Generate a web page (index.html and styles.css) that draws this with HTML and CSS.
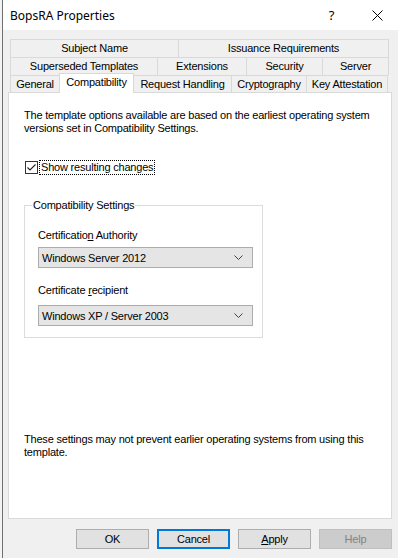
FILE: index.html
```html
<!DOCTYPE html>
<html>
<head>
<meta charset="utf-8">
<title>BopsRA Properties</title>
<link rel="stylesheet" href="styles.css">
</head>
<body>
<div class="window">
  <div class="titlebar">
    <span class="title">BopsRA Properties</span>
    <span class="spacer"></span>
    <span class="tb-btn help-q">?</span>
    <span class="tb-btn close">
      <svg width="11" height="11" viewBox="0 0 11 11"><path d="M0.5 0.5 L10.5 10.5 M10.5 0.5 L0.5 10.5" stroke="#000" stroke-width="1" fill="none"/></svg>
    </span>
  </div>

  <div class="tabs">
    <div class="tab-row r1">
      <div class="tab w168">Subject Name</div>
      <div class="tab w211 last">Issuance Requirements</div>
    </div>
    <div class="tab-row r2">
      <div class="tab w147">Superseded Templates</div>
      <div class="tab w89">Extensions</div>
      <div class="tab w76">Security</div>
      <div class="tab w67 last">Server</div>
    </div>
    <div class="tab-row r3">
      <div class="tab w49">General</div>
      <div class="tab w75 selected">Compatibility</div>
      <div class="tab w98">Request Handling</div>
      <div class="tab w75b">Cryptography</div>
      <div class="tab w82 last">Key Attestation</div>
    </div>
  </div>

  <div class="panel">
    <p class="intro">The template options available are based on the earliest operating system versions set in Compatibility Settings.</p>
    <div class="check-row">
      <span class="checkbox">
        <svg width="11" height="11" viewBox="0 0 11 11"><path d="M1.5 5.5 L4 8 L9.5 2.5" stroke="#222" stroke-width="1.1" fill="none"/></svg>
      </span>
      <span class="check-label">Show resulting changes</span>
    </div>

    <div class="group">
      <span class="legend">Compatibility Settings</span>
      <div class="field-label first">Certificatio<u>n</u> Authority</div>
      <div class="combo">
        <span class="combo-text">Windows Server 2012</span>
        <svg class="chev" width="9" height="5" viewBox="0 0 9 5"><path d="M0.5 0.5 L4.5 4.5 L8.5 0.5" stroke="#444" stroke-width="1" fill="none"/></svg>
      </div>
      <div class="field-label second">Certificate <u>r</u>ecipient</div>
      <div class="combo">
        <span class="combo-text">Windows XP / Server 2003</span>
        <svg class="chev" width="9" height="5" viewBox="0 0 9 5"><path d="M0.5 0.5 L4.5 4.5 L8.5 0.5" stroke="#444" stroke-width="1" fill="none"/></svg>
      </div>
    </div>

    <p class="note">These settings may not prevent earlier operating systems from using this template.</p>
  </div>

  <div class="buttons">
    <button class="btn">OK</button>
    <button class="btn default">Cancel</button>
    <button class="btn"><u>A</u>pply</button>
    <button class="btn disabled">Help</button>
  </div>
</div>
</body>
</html>
```

FILE: styles.css
```css
* { box-sizing: border-box; }
html, body {
  margin: 0;
  padding: 0;
  width: 398px;
  height: 558px;
  overflow: hidden;
  background: #f3f3f3;
}
body {
  font-family: "Liberation Sans", Arial, sans-serif;
  font-size: 11px;
  letter-spacing: -0.2px;
  color: #000;
}
.window {
  margin-left: 2px;
  height: 558px;
  border-left: 1px solid #707070;
  background: #f0f0f0;
  display: flex;
  flex-direction: column;
}
.titlebar {
  height: 30px;
  background: #fff;
  display: flex;
  align-items: center;
  flex: none;
}
.title {
  font-family: "Noto Sans", "Open Sans", sans-serif;
  font-size: 12px;
  letter-spacing: 0;
  padding-left: 7px;
}
.spacer { flex: 1; }
.tb-btn {
  width: 45px;
  height: 30px;
  display: flex;
  align-items: center;
  justify-content: center;
}
.help-q {
  font-family: "Noto Sans", sans-serif;
  font-size: 13px;
  letter-spacing: 0;
}
.close { width: 44px; padding-left: 2px; }

.tabs {
  margin: 9px 0 0 7px;
  width: 379px;
  flex: none;
}
.tab-row { display: flex; }
.r1 .tab, .r2 .tab { height: 18px; }
.r3 .tab { height: 17px; }
.tab {
  flex: none;
  border-top: 1px solid #d9d9d9;
  border-left: 1px solid #d9d9d9;
  background: #f0f0f0;
  text-align: center;
  line-height: 16px;
  white-space: nowrap;
}
.tab.last { border-right: 1px solid #d9d9d9; }
.w168 { width: 168px; }
.w211 { width: 211px; }
.w147 { width: 147px; }
.w89 { width: 89px; }
.w76 { width: 76px; }
.w67 { width: 67px; }
.w49 { width: 49px; }
.w75 { width: 75px; }
.w98 { width: 98px; }
.w75b { width: 75px; }
.w82 { width: 82px; }
.tab.selected {
  position: relative;
  z-index: 2;
  background: #fff;
  height: 20px;
  margin-top: -2px;
  margin-bottom: -1px;
  border-right: 1px solid #d9d9d9;
  margin-right: -1px;
  line-height: 16px;
}

.panel {
  margin-left: 5px;
  width: 384px;
  height: 427px;
  flex: none;
  background: #fff;
  border: 1px solid #d9d9d9;
  padding: 16px 4px 0 15px;
  position: relative;
  z-index: 1;
}
.intro, .note {
  margin: 0;
  line-height: 13px;
}
.check-row {
  margin-top: 25px;
  height: 15px;
  display: flex;
  align-items: center;
}
.checkbox {
  width: 13px;
  height: 13px;
  border: 1px solid #333;
  background: #fff;
  margin-left: 1px;
  display: flex;
  align-items: center;
  justify-content: center;
}
.check-label {
  margin-left: 1px;
  height: 15px;
  line-height: 13px;
  padding: 0 1px;
  border: 1px dotted #000;
}
.group {
  margin-top: 30px;
  width: 239px;
  height: 133px;
  border: 1px solid #dcdcdc;
  padding-left: 13px;
}
.legend {
  display: block;
  width: max-content;
  margin: -7px 0 0 -6px;
  padding: 0 1px;
  background: #fff;
  line-height: 13px;
}
.field-label {
  line-height: 13px;
}
.field-label.first { margin-top: 17px; }
.field-label.second { margin-top: 16px; }
.combo {
  margin-top: 5px;
  width: 215px;
  height: 21px;
  background: #e5e5e5;
  border: 1px solid #acacac;
  display: flex;
  align-items: center;
  justify-content: space-between;
  padding: 0 9px 0 3px;
}
.field-label.second + .combo { margin-top: 8px; }
.chev { flex: none; }
.note {
  margin-top: 95px;
}

.buttons {
  display: flex;
  justify-content: flex-end;
  gap: 8px;
  margin-top: 10px;
  padding-right: 6px;
}
.btn {
  width: 73px;
  height: 20px;
  background: #e1e1e1;
  border: 1px solid #adadad;
  font-family: "Liberation Sans", Arial, sans-serif;
  font-size: 11px;
  letter-spacing: -0.2px;
  color: #000;
  padding: 0;
  margin: 0;
}
.btn.default { border: 2px solid #0078d7; }
.btn.disabled {
  background: #cccccc;
  border-color: #bfbfbf;
  color: #838383;
}
u { text-decoration: underline; }
```
